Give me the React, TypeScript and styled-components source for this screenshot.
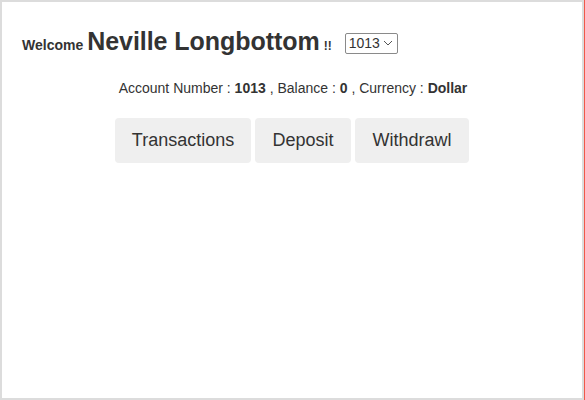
import React, { FC } from 'react'
import styled, { createGlobalStyle } from 'styled-components'

const GlobalStyle = createGlobalStyle`
  html, body {
    margin: 0;
    padding: 0;
    background: #ffffff;
  }
  body {
    font-family: "Liberation Sans", Arial, sans-serif;
    color: #333333;
  }
`

const Frame = styled.div`
  width: 585px;
  height: 400px;
  box-sizing: border-box;
  border: 2px solid #dcdcdc;
  border-right: 3px solid #dcdcdc;
  position: relative;

  &::after {
    content: '';
    position: absolute;
    top: -2px;
    bottom: -2px;
    right: -3px;
    width: 1px;
    background: #f0584a;
  }
`

const Header = styled.div`
  display: flex;
  align-items: baseline;
  padding: 25px 0 0 20px;
  height: 30px;
`

const Welcome = styled.span`
  font-size: 14px;
  font-weight: 700;
  margin-right: 4px;
`

const Name = styled.span`
  font-size: 25px;
  font-weight: 700;
  letter-spacing: -0.05px;
`

const Bang = styled.span`
  font-size: 12px;
  font-weight: 700;
  margin: 0 13px 0 4px;
`

const AccountSelect = styled.select`
  font-family: "Liberation Sans", Arial, sans-serif;
  font-size: 14px;
  color: #333;
  height: 21px;
  width: 53px;
  padding: 0 0 0 3px;
  border: 1px solid #8a8a8a;
  border-radius: 2px;
  background: #fff;
  appearance: none;
  background-image: url("data:image/svg+xml;utf8,<svg xmlns='http://www.w3.org/2000/svg' width='10' height='6'><path d='M1 1l4 4 4-4' fill='none' stroke='%23555' stroke-width='1'/></svg>");
  background-repeat: no-repeat;
  background-position: right 4px center;
  align-self: center;
  position: relative;
  top: 1px;
`

const Details = styled.div`
  text-align: center;
  font-size: 14px;
  margin-top: 23px;
  padding-left: 2px;
`

const Actions = styled.div`
  display: flex;
  justify-content: center;
  gap: 4px;
  margin-top: 22px;
`

const ActionButton = styled.button<{ $w: number }>`
  width: ${(p) => p.$w}px;
  height: 45px;
  border: none;
  border-radius: 4px;
  background: #efefef;
  font-family: "Liberation Sans", Arial, sans-serif;
  font-size: 18px;
  color: #333;
  cursor: pointer;
`

const App: FC = () => {
  return (
    <>
      <GlobalStyle />
      <Frame>
        <Header>
          <Welcome>Welcome</Welcome>
          <Name>Neville Longbottom</Name>
          <Bang>!!</Bang>
          <AccountSelect defaultValue="1013">
            <option value="1013">1013</option>
          </AccountSelect>
        </Header>
        <Details>
          Account Number : <b>1013</b> , Balance : <b>0</b> , Currency : <b>Dollar</b>
        </Details>
        <Actions>
          <ActionButton $w={136}>Transactions</ActionButton>
          <ActionButton $w={96}>Deposit</ActionButton>
          <ActionButton $w={114}>Withdrawl</ActionButton>
        </Actions>
      </Frame>
    </>
  )
}

export default App
